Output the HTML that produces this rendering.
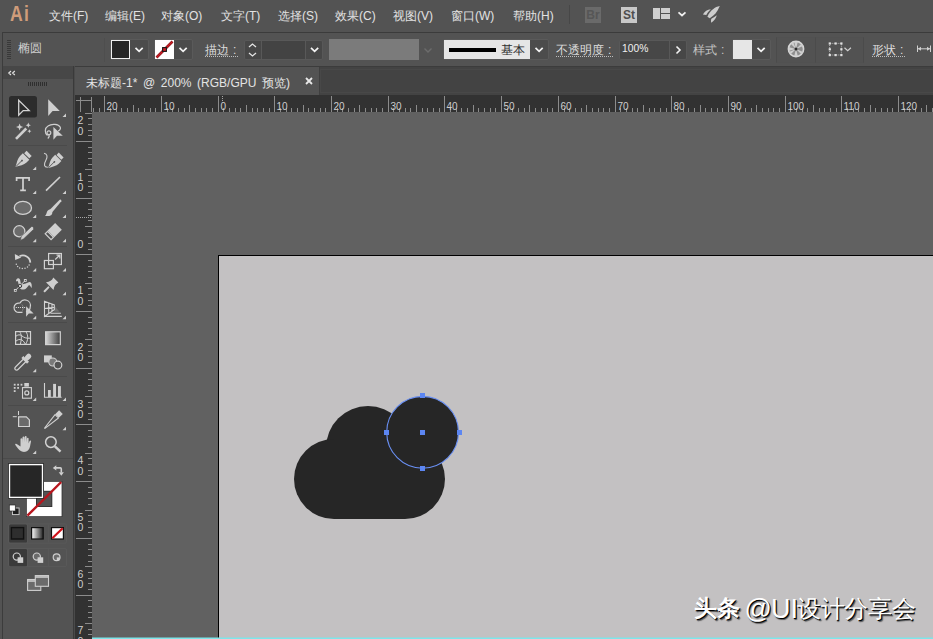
<!DOCTYPE html>
<html><head><meta charset="utf-8">
<style>
*{box-sizing:border-box}
html,body{margin:0;padding:0}
body{width:933px;height:639px;overflow:hidden;position:relative;background:#535353;font-family:"Liberation Sans",sans-serif;color:#d6d6d6}
.a{position:absolute}
.menu{top:0;left:0;width:933px;height:31px;background:#535353}
.mi{position:absolute;top:8px;font-size:12px;line-height:16px;color:#e2e2e2;white-space:nowrap}
.ctrl{top:31px;left:0;width:933px;height:35px;background:#535353;border-top:1px solid #535353}
.lbl{position:absolute;font-size:12px;line-height:16px;color:#d8d8d8;white-space:nowrap}
.tabrow{top:66px;left:0;width:933px;height:29px;background:#434343}
.ruler-top{top:95px;left:75px;width:858px;height:17px;background:#323232}
.ruler-left{top:95px;left:75px;width:17px;height:544px;background:#323232}
.paste{top:112px;left:92px;width:841px;height:527px;background:#616161}
.artboard{top:255px;left:218px;width:715px;height:384px;background:#c3c1c2;border-top:1px solid #000;border-left:1px solid #000}
.tool{position:absolute;left:0;top:66px;width:75px;height:573px;background:#535353}
</style></head>
<body>
<div class="a menu">
  <div class="a" style="left:10px;top:1px;font-size:22px;line-height:26px;color:#cf9c7a;font-weight:bold;transform:scaleX(0.8);transform-origin:0 0;letter-spacing:1.5px">Ai</div>
  <div class="mi" style="left:49px">文件(F)</div>
  <div class="mi" style="left:105px">编辑(E)</div>
  <div class="mi" style="left:161px">对象(O)</div>
  <div class="mi" style="left:221px">文字(T)</div>
  <div class="mi" style="left:278px">选择(S)</div>
  <div class="mi" style="left:335px">效果(C)</div>
  <div class="mi" style="left:393px">视图(V)</div>
  <div class="mi" style="left:451px">窗口(W)</div>
  <div class="mi" style="left:513px">帮助(H)</div>
  <div class="a" style="left:569px;top:5px;width:1px;height:19px;background:#474747"></div>
  <div class="a" style="left:585px;top:7px;width:16px;height:15.5px;background:#6a6a6a;color:#565656;font-size:12px;line-height:16px;font-weight:bold;text-align:center">Br</div>
  <div class="a" style="left:621px;top:7px;width:16px;height:15.5px;background:#c8c8c8;color:#4e4e4e;font-size:12px;line-height:16px;font-weight:bold;text-align:center">St</div>
  <svg class="a" style="left:653px;top:8px" width="36" height="12"><g fill="#cfcfcf"><rect x="0" y="0" width="7" height="11"/><rect x="8" y="0" width="9" height="5"/><rect x="8" y="6" width="9" height="5"/></g><path d="M25.5 4.3l3.5 3.2 3.5-3.2" fill="none" stroke="#f0f0f0" stroke-width="1.7"/></svg>
  <svg class="a" style="left:698px;top:2px" width="26" height="24"><g fill="#cdcdcd"><path d="M21.8 4.1C17 5 12.5 8 9.4 14.7L11.7 16.2C16 14 19.5 10 21.8 4.1Z"/><path d="M4.9 12.6C6.5 9.5 9.5 7.6 12.8 7.3C10.8 9.3 9.3 11 8.3 13Z"/><path d="M13.2 20.7C12.9 18.8 13 17.6 13.4 16.7C15.5 15.8 17.3 14.6 18.8 13.3C18 16.5 16 19 13.2 20.7Z"/></g></svg>
</div>
<div class="a ctrl">
  <div class="a" style="left:2px;top:0;width:931px;height:1px;background:#3b3b3b"></div>
  <div class="a" style="left:2px;top:0;width:1px;height:35px;background:#3c3c3c"></div>
  <div class="a" style="left:7px;top:8px;width:3.5px;height:19px;background:repeating-linear-gradient(#393939 0 1px,transparent 1px 2px)"></div>
  <div class="lbl" style="left:18px;top:8px;color:#cfcfcf">椭圆</div>
  <div class="a" style="left:104px;top:6px;width:1px;height:24px;background:#4e4e4e"></div>

  <div class="a" style="left:110px;top:7px;width:39px;height:21px;background:#4c4c4c;border:1px solid #5a5a5a;border-radius:2px"></div>
  <div class="a" style="left:111px;top:8px;width:19px;height:19px;background:#262626;border:1px solid #f0f0f0"></div>
  <svg class="a" style="left:130px;top:8px" width="18" height="20"><path d="M5.5 7.8l3.6 3.6 3.6-3.6" fill="none" stroke="#f4f4f4" stroke-width="1.7"/></svg>
  <div class="a" style="left:154px;top:7px;width:39px;height:21px;background:#4c4c4c;border:1px solid #5a5a5a;border-radius:2px"></div>
  <svg class="a" style="left:155px;top:8px" width="19" height="19"><rect width="19" height="19" fill="#fff"/><path d="M1.5 17.5L17.5 1.5" stroke="#8e1016" stroke-width="2.6"/><path d="M1.8 17.2L17.2 1.8" stroke="#c81c25" stroke-width="1.3"/><rect x="7.6" y="7.6" width="3.8" height="3.8" fill="#c81c25" stroke="#1a1a1a" stroke-width="1.1"/></svg>
  <svg class="a" style="left:174px;top:8px" width="18" height="20"><path d="M5.5 7.8l3.6 3.6 3.6-3.6" fill="none" stroke="#f4f4f4" stroke-width="1.7"/></svg>
  <div class="lbl" style="left:205px;top:10px;color:#dcdcdc">描边<span style="margin-left:4px">:</span></div>
  <div class="a" style="left:205px;top:24px;width:33px;height:1px;background:repeating-linear-gradient(90deg,#bdbdbd 0 1px,transparent 1px 2px)"></div>
  <div class="a" style="left:244px;top:8px;width:79px;height:20px;background:#474747;border:1px solid #585858;border-radius:2px"></div>
  <div class="a" style="left:261px;top:9px;width:45px;height:18px;background:#434343;border-left:1px solid #585858;border-right:1px solid #585858"></div>
  <svg class="a" style="left:244px;top:8px" width="18" height="20"><path d="M5 7l3.5-3 3.5 3M5 13l3.5 3 3.5-3" fill="none" stroke="#e6e6e6" stroke-width="1.3"/></svg>
  <svg class="a" style="left:306px;top:8px" width="17" height="20"><path d="M5 7.8l3.6 3.6 3.6-3.6" fill="none" stroke="#f4f4f4" stroke-width="1.7"/></svg>
  <div class="a" style="left:329px;top:7px;width:90px;height:21px;background:#7b7b7b"></div>
  <svg class="a" style="left:419px;top:8px" width="18" height="20"><path d="M5.5 8.5l3.5 3.5 3.5-3.5" fill="none" stroke="#6c6c6c" stroke-width="1.4"/></svg>
  <div class="a" style="left:443px;top:7px;width:106px;height:21px;background:#4c4c4c;border:1px solid #5a5a5a;border-radius:2px"></div>
  <div class="a" style="left:444px;top:8px;width:86px;height:19px;background:#e6e6e6"></div>
  <div class="a" style="left:449px;top:15.5px;width:47px;height:4px;background:#000"></div>
  <div class="lbl" style="left:501px;top:10px;color:#2e2e2e">基本</div>
  <svg class="a" style="left:530px;top:8px" width="18" height="20"><path d="M5.5 7.8l3.6 3.6 3.6-3.6" fill="none" stroke="#f4f4f4" stroke-width="1.7"/></svg>
  <div class="lbl" style="left:556px;top:10px;color:#dcdcdc">不透明度<span style="margin-left:4px">:</span></div>
  <div class="a" style="left:556px;top:24px;width:57px;height:1px;background:repeating-linear-gradient(90deg,#bdbdbd 0 1px,transparent 1px 2px)"></div>
  <div class="a" style="left:619px;top:8px;width:68px;height:20px;background:#474747;border:1px solid #585858;border-radius:2px"></div>
  <div class="a" style="left:669px;top:9px;width:1px;height:18px;background:#585858"></div>
  <div class="a" style="left:622px;top:9.5px;font-size:10.3px;line-height:14px;color:#f0f0f0">100%</div>
  <svg class="a" style="left:670px;top:8px" width="17" height="20"><path d="M6.5 6.5l3.5 3.5-3.5 3.5" fill="none" stroke="#f2f2f2" stroke-width="1.6"/></svg>
  <div class="lbl" style="left:693px;top:10px;color:#c4c4c4">样式<span style="margin-left:4px">:</span></div>
  <div class="a" style="left:732px;top:7px;width:39px;height:21px;background:#4c4c4c;border:1px solid #5a5a5a;border-radius:2px"></div>
  <div class="a" style="left:733px;top:8px;width:19px;height:19px;background:#e6e6e6"></div>
  <svg class="a" style="left:752px;top:8px" width="18" height="20"><path d="M5.5 7.8l3.6 3.6 3.6-3.6" fill="none" stroke="#f4f4f4" stroke-width="1.7"/></svg>
  <div class="a" style="left:776px;top:5px;width:40px;height:26px;background:#525252;border:1px solid #4b4b4b;border-top-color:#515151;border-bottom-color:#515151"></div>
  <div class="a" style="left:816px;top:5px;width:48px;height:26px;background:#525252;border:1px solid #4b4b4b;border-left:none;border-top-color:#515151;border-bottom-color:#515151"></div>
  <svg class="a" style="left:786px;top:7px" width="20" height="20"><circle cx="10" cy="10" r="7.6" fill="#8e8e8e" stroke="#d6d6d6" stroke-width="1.6"/><g fill="#cdcdcd"><path d="M10 10L8.2 2.8H11.8Z"/><path d="M10 10L15.1 4.9L17.2 7.1Z"/><path d="M10 10L17.2 11.8V8.2Z" opacity="0"/><path d="M10 10L17.2 12.9L15.1 15.1Z"/><path d="M10 10L11.8 17.2H8.2Z"/><path d="M10 10L4.9 15.1L2.8 12.9Z"/><path d="M10 10L2.8 8.2V11.8Z"/><path d="M10 10L4.9 4.9L7.1 2.8Z"/></g><circle cx="10" cy="10" r="1.5" fill="#2a2a2a"/></svg>
  <svg class="a" style="left:826px;top:9px" width="28" height="17"><path d="M3.7 2.4H15.4V14H3.7Z" fill="none" stroke="#bdbdbd" stroke-width="0.9" stroke-dasharray="1 1"/><g fill="#e0e0e0"><rect x="2.7" y="1.4" width="2.2" height="2.2"/><rect x="8.5" y="1.4" width="2.2" height="2.2"/><rect x="14.3" y="1.4" width="2.2" height="2.2"/><rect x="2.7" y="7.2" width="2.2" height="2.2"/><rect x="14.3" y="7.2" width="2.2" height="2.2"/><rect x="2.7" y="13" width="2.2" height="2.2"/><rect x="8.5" y="13" width="2.2" height="2.2"/><rect x="14.3" y="13" width="2.2" height="2.2"/></g><path d="M18.5 6.8l3.2 3 3.2-3" fill="none" stroke="#d0d0d0" stroke-width="1.2"/></svg>
  
  <div class="lbl" style="left:872px;top:10px;color:#dcdcdc">形状<span style="margin-left:4px">:</span></div>
  <div class="a" style="left:872px;top:24px;width:34px;height:1px;background:repeating-linear-gradient(90deg,#bdbdbd 0 1px,transparent 1px 2px)"></div>
  <svg class="a" style="left:916px;top:12px" width="17" height="10"><path d="M1.5 1.5V8M14.5 1.5V8M2 4.8H14" fill="none" stroke="#d0d0d0" stroke-width="1"/><path d="M2 4.8L5 2.8V6.8ZM14 4.8L11 2.8V6.8Z" fill="#d0d0d0"/></svg>
</div>
<div class="a tabrow" style="border-top:1px solid #3c3c3c">
  <div class="a" style="left:320px;top:2px;width:613px;height:24px;border:1px solid #484848;border-right:none"></div>
  <div class="a" style="left:75px;top:0;width:244px;height:28px;background:#535353"></div>
  <div class="a" style="left:319px;top:0;width:1px;height:28px;background:#3f3f3f"></div>
  <div class="a" style="left:86px;top:7.5px;font-size:12px;line-height:16px;color:#e4e4e4;white-space:nowrap;word-spacing:2.3px">未标题-1* @ 200% (RGB/GPU 预览)</div>
  <svg class="a" style="left:304px;top:9px" width="10" height="10"><path d="M2 2l6 6M8 2l-6 6" stroke="#e8e8e8" stroke-width="1.8"/></svg>
</div>
<div class="a tool">
  <div class="a" style="left:2px;top:0;width:1px;height:573px;background:#3c3c3c"></div>
  <div class="a" style="left:73px;top:0;width:1px;height:573px;background:#3a3a3a"></div><div class="a" style="left:74px;top:0;width:1px;height:573px;background:#4a4a4a"></div>
  <div class="a" style="left:3px;top:0;width:70px;height:12.5px;background:#474747"></div>
  <svg class="a" style="left:7px;top:4px" width="10" height="6"><path d="M4 1L1.8 3 4 5M7.8 1L5.6 3 7.8 5" fill="none" stroke="#e0e0e0" stroke-width="1.2"/></svg>
  <div class="a" style="left:28px;top:16px;width:20px;height:4px;background:repeating-linear-gradient(90deg,#2f2f2f 0 1px,transparent 1px 2px)"></div>
</div>
<!--TOOLS-->
<svg class="a" style="left:0;top:0" width="75" height="639" viewBox="0 0 75 639">
<g fill="none" stroke="#4a4a4a" stroke-width="1">
<path d="M8 145.5H67M8 246.5H67M8 322.5H67M8 376.5H67M8 405.5H67M3 458.5H73"/>
</g>
<rect x="9" y="96" width="28" height="21.5" rx="2.5" fill="#2c2c2c"/>
<g fill="#cfcfcf">
<!-- tri indicators -->
<path d="M66 113.5V117H62.5Z"/>
<path d="M36.2 166.5V170H32.7Z"/>
<path d="M36.2 190.5V194H32.7Z"/><path d="M66 190.5V194H62.5Z"/>
<path d="M36.2 214.5V218H32.7Z"/><path d="M66 214.5V218H62.5Z"/>
<path d="M36.2 238.8V242.3H32.7Z"/><path d="M66 238.8V242.3H62.5Z"/>
<path d="M36.2 268V271.5H32.7Z"/><path d="M66 268V271.5H62.5Z"/>
<path d="M36.2 291.7V295.2H32.7Z"/><path d="M66 291.7V295.2H62.5Z"/>
<path d="M36.2 315.8V319.3H32.7Z"/><path d="M66 315.8V319.3H62.5Z"/>
<path d="M36.2 368.7V372.2H32.7Z"/>
<path d="M36.2 397.6V401.1H32.7Z"/><path d="M66 397.6V401.1H62.5Z"/>
<path d="M66 426.8V430.3H62.5Z"/>
<path d="M36.2 450.5V454H32.7Z"/>
</g>
<!-- selection -->
<path d="M18.7 100.2V115.2L23.2 110.6H29.2Z" fill="none" stroke="#d4d4d4" stroke-width="1.3" stroke-linejoin="miter"/>
<path d="M48.2 99.3V116.1L52.6 110.9H59.8Z" fill="#cfcfcf"/>
<!-- magic wand -->
<path d="M16 138.8L26.3 128.5" stroke="#cfcfcf" stroke-width="2.6"/>
<path d="M19.6 123.4L20.6 126L23.2 127L20.6 128L19.6 130.6L18.6 128L16 127L18.6 126Z" fill="#cfcfcf"/>
<path d="M28.3 122.6L29.1 124.4L30.9 125.2L29.1 126L28.3 127.8L27.5 126L25.7 125.2L27.5 124.4Z" fill="#cfcfcf"/>
<path d="M29.4 129.2L30 130.6L31.4 131.2L30 131.8L29.4 133.2L28.8 131.8L27.4 131.2L28.8 130.6Z" fill="#cfcfcf"/>
<!-- lasso -->
<path d="M47.5 135.5C44.5 133.5 44.5 128 48 126C52 123.3 58.5 124 60.3 127.3C61 129 59.5 130.5 58 131" fill="none" stroke="#cfcfcf" stroke-width="1.2"/>
<circle cx="48.9" cy="132.7" r="1.9" fill="none" stroke="#cfcfcf" stroke-width="1.2"/>
<path d="M48.8 134.6C49.5 136 49 137.5 47.8 138.4" fill="none" stroke="#cfcfcf" stroke-width="1.2"/>
<path d="M53.4 127V139.8L57 135.8H62.8Z" fill="#cfcfcf"/>
<!-- pen -->
<g transform="translate(22.2 160.3) rotate(45)">
<rect x="-3.6" y="-9.8" width="7.2" height="3.4" fill="#cfcfcf"/>
<path d="M-4.6 -5.5H4.6V-1.5C4.6 2 2 5.5 0 9.6C-2 5.5 -4.6 2 -4.6 -1.5Z" fill="#cfcfcf"/>
<path d="M0 0.5V9" stroke="#535353" stroke-width="0.9"/>
<circle cx="0" cy="0.3" r="0.9" fill="#535353"/>
</g>
<!-- curvature pen -->
<g transform="translate(54.6 161.6) rotate(45) scale(0.95)">
<rect x="-3.6" y="-9.8" width="7.2" height="3.4" fill="#cfcfcf"/>
<path d="M-4.6 -5.5H4.6V-1.5C4.6 2 2 5.5 0 9.6C-2 5.5 -4.6 2 -4.6 -1.5Z" fill="#cfcfcf"/>
<path d="M0 0.5V9" stroke="#535353" stroke-width="0.9"/>
<circle cx="0" cy="0.3" r="0.9" fill="#535353"/>
</g>
<path d="M44 153.2C47.5 153.8 47.8 157 45.8 160.5C43.5 164.5 44 167.5 47.8 167.3" fill="none" stroke="#cfcfcf" stroke-width="1.1"/>
<!-- type -->
<path d="M16.6 181V177.8H29.1V181M23 177.8V190.3M20.2 190.3H25.9" fill="none" stroke="#d2d2d2" stroke-width="1.7"/>
<!-- line -->
<path d="M46 190.6L60 177" stroke="#cfcfcf" stroke-width="1.7"/>
<!-- ellipse -->
<ellipse cx="22.9" cy="207.9" rx="8.6" ry="6.5" fill="#6b6b6b" stroke="#d2d2d2" stroke-width="1.3"/>
<!-- paintbrush -->
<path d="M49.74 209.86L59.69 199.76Q61.6 198.9 61.31 201.24L52.26 212.14Z" fill="#cfcfcf"/>
<path d="M50.5 209.5C52.6 210.6 53 213.4 51.4 214.9C49.9 216.2 47.5 216 45 216C46.7 214.4 46.4 212.8 47.4 211.1C48.2 209.7 49.5 209.1 50.5 209.5Z" fill="#cfcfcf"/>
<!-- blob brush -->
<circle cx="19.3" cy="231.3" r="5.6" fill="#6b6b6b" stroke="#d2d2d2" stroke-width="1.3"/>
<path d="M21.28 236.19L31.28 226.69Q33.6 225.6 33.72 229.31L23.72 238.81L20.3 240.4Z" fill="#cfcfcf" stroke="#535353" stroke-width="0.7"/>
<!-- eraser -->
<g transform="translate(53.3 231.6) rotate(45)">
<rect x="-4.75" y="-7.3" width="9.5" height="10.6" fill="#cfcfcf"/>
<rect x="-4.15" y="3.9" width="8.3" height="3.4" fill="none" stroke="#cfcfcf" stroke-width="1.2"/>
</g>
<!-- rotate -->
<path d="M19.5 256.3A7.4 7.4 0 0 1 30.3 262.6" fill="none" stroke="#d2d2d2" stroke-width="1.8"/>
<path d="M14.8 253.9L15.2 260L21.2 257.6Z" fill="#d2d2d2"/>
<g fill="#cfcfcf"><circle cx="16.3" cy="264.2" r="0.75"/><circle cx="17.6" cy="266.4" r="0.75"/><circle cx="19.6" cy="268" r="0.75"/><circle cx="22.3" cy="268.6" r="0.75"/><circle cx="25" cy="268.3" r="0.75"/><circle cx="27.5" cy="266.9" r="0.75"/><circle cx="29.1" cy="265" r="0.75"/></g>
<!-- scale -->
<rect x="48.6" y="253.5" width="12.8" height="11" fill="none" stroke="#d2d2d2" stroke-width="1.2"/>
<rect x="44.4" y="260.5" width="9" height="8.2" fill="none" stroke="#d2d2d2" stroke-width="1.2"/>
<path d="M55.2 259.5L59.6 255.2M56.5 255.2H59.8V258.5" fill="none" stroke="#cfcfcf" stroke-width="1.2"/>
<!-- puppet -->
<path d="M16 281.5C15.8 279.5 17 278 18.5 278.2C20 278.4 20.3 280 20.5 282C21 284.5 22.5 284.5 25 283.8C27 283.2 28.5 281.8 30 282C31.5 282.3 32 285 31.7 288C30.8 287 30 285.5 29 285C27.5 287 26 289.6 23 289.6C21 289.6 19.5 288.5 19 286.5C18.5 284.5 18.5 282 17.5 281C17 280.8 16.5 281 16 281.5Z" fill="#cfcfcf"/>
<path d="M15.4 290.4L25.3 280.4" stroke="#cfcfcf" stroke-width="1"/>
<rect x="23.9" y="279" width="2.8" height="2.8" fill="#cfcfcf"/><rect x="24.9" y="280" width="0.9" height="0.9" fill="#333"/>
<circle cx="20" cy="285.9" r="1.7" fill="#cfcfcf" stroke="#2e2e2e" stroke-width="0.9"/>
<rect x="13.9" y="289" width="2.8" height="2.8" fill="#cfcfcf"/><rect x="14.9" y="290" width="0.9" height="0.9" fill="#333"/>
<!-- pin -->
<path d="M53.3 277.4L58.4 282.5Q54.2 284.3 53.5 289.9L46 282.3Q51.6 281.6 53.3 277.4Z" fill="#cfcfcf"/>
<path d="M48.4 287.4L44.6 291.2" stroke="#cfcfcf" stroke-width="2" stroke-linecap="round"/>
<!-- shape builder -->
<path d="M19.9 303.2A5.5 5.5 0 0 1 30.3 306.6M30.3 306.6A5.5 5.5 0 0 1 26 311.9M22.5 312.1A5.5 5.5 0 0 1 19.9 312.3A4.7 4.7 0 1 1 19.9 303.2" fill="none" stroke="#d2d2d2" stroke-width="1.2"/>
<path d="M21.8 304.4A4.7 4.7 0 0 1 22.4 310.8" fill="none" stroke="#8a8a8a" stroke-width="0.8"/>
<g fill="#e0e0e0"><rect x="15.8" y="307" width="1" height="1"/><rect x="17.9" y="307" width="1" height="1"/><rect x="19.9" y="307" width="1" height="1"/><rect x="22" y="307" width="1" height="1"/><rect x="24.1" y="307" width="1" height="1"/></g>
<path d="M26.1 306.3V316.8L28.8 313.5H33.6Z" fill="#cfcfcf"/>
<!-- perspective grid -->
<path d="M54.3 305.5L59.5 311.8H54.3Z" fill="#6e6e6e"/>
<path d="M44.5 301.2V316.4L54.3 309.6V305L44.5 301.2ZM48.7 302.9V313.2M52 304.1V311.2M44.5 308.5L54.3 307.3M50.5 313.3H60.8M44.5 316.4H61.8" fill="none" stroke="#d2d2d2" stroke-width="1.1"/>
<!-- mesh -->
<rect x="15.6" y="331.6" width="14.9" height="12.8" fill="none" stroke="#d2d2d2" stroke-width="1.2"/>
<path d="M19.5 331.5C21.5 334 22 337.5 20.3 344.5M25.8 331.5C28.5 335 28.3 340 25.5 344.5M15.5 336.5C18 334.5 20 334.2 22 336C24 337.5 26 338.5 30.5 338.2M15.5 341.5C17.5 339.5 20 339 22 340C23.5 341 24.5 342.5 25.5 344.5" fill="none" stroke="#d2d2d2" stroke-width="1"/>
<!-- gradient -->
<defs><linearGradient id="gr" x1="0" x2="1"><stop offset="0" stop-color="#d8d8d8"/><stop offset="1" stop-color="#3e3e3e"/></linearGradient>
<linearGradient id="gr2" x1="0" x2="1"><stop offset="0" stop-color="#ffffff"/><stop offset="1" stop-color="#222"/></linearGradient></defs>
<rect x="45.6" y="331.8" width="14.7" height="12.8" fill="url(#gr)" stroke="#d2d2d2" stroke-width="1.2"/>
<!-- eyedropper -->
<g transform="translate(23 362) rotate(45)">
<path d="M-1.8 -2.5V8.5C-1.8 10 -0.9 10.8 0 10.8C0.9 10.8 1.8 10 1.8 8.5V-2.5" fill="none" stroke="#cfcfcf" stroke-width="1.2"/>
<rect x="-4" y="-4.5" width="8" height="2.8" fill="#cfcfcf"/>
<rect x="-2.5" y="-10.5" width="5" height="7" rx="2.2" fill="#cfcfcf"/>
</g>
<!-- blend -->
<rect x="44" y="355.4" width="7.8" height="7" fill="#cfcfcf"/>
<circle cx="52.8" cy="362" r="4" fill="#7a7a7a" stroke="#cfcfcf" stroke-width="1.1"/>
<circle cx="57.9" cy="365.1" r="3.9" fill="#535353" stroke="#d2d2d2" stroke-width="1.2"/>
<!-- symbol sprayer -->
<g fill="#cfcfcf"><rect x="13.8" y="383.8" width="1.8" height="1.8"/><rect x="17.2" y="383.8" width="1.8" height="1.8"/><rect x="20.6" y="383.8" width="1.8" height="1.8"/><rect x="13.8" y="387" width="1.8" height="1.8"/><rect x="17.2" y="387" width="1.8" height="1.8"/><rect x="13.8" y="390.2" width="1.8" height="1.8"/>
<rect x="24.3" y="383" width="4.6" height="3.6"/></g>
<rect x="22.5" y="387.6" width="8.9" height="10.6" fill="none" stroke="#d2d2d2" stroke-width="1.1"/>
<circle cx="26.8" cy="392.9" r="2" fill="none" stroke="#d2d2d2" stroke-width="1.2"/>
<!-- column graph -->
<path d="M44.5 383V397.3H61.6" fill="none" stroke="#d2d2d2" stroke-width="1.1"/>
<g fill="#cfcfcf"><rect x="48" y="390" width="2.8" height="7"/><rect x="53.1" y="383.9" width="2.9" height="13.1"/><rect x="58" y="386.1" width="2.9" height="10.9"/></g>
<!-- artboard -->
<path d="M18.5 411V415M12.8 416.7H16.8" stroke="#d2d2d2" stroke-width="1"/>
<path d="M18.6 416.8H26.3L29.4 419.9V426.5H18.6Z" fill="#6b6b6b" stroke="#d2d2d2" stroke-width="1.2"/>
<!-- slice -->
<g transform="translate(53 420) rotate(45)">
<rect x="-2.6" y="-11.2" width="5.2" height="5.5" fill="#cfcfcf"/>
<path d="M-2.4 -5.3H2.4L0.3 11.6L-0.3 11.6Z" fill="none" stroke="#cfcfcf" stroke-width="1.1" stroke-linejoin="round"/>
</g>
<!-- hand -->
<path d="M17.5 444.5C16.3 443.4 15 443.6 15.2 444.8C16.5 447 18.2 449 20 450.5C21.5 451.7 23.5 452.2 25.5 451.8C28.2 451.2 29.5 449 30 446.5L31 441.5C31.2 440.3 30 440 29.5 441L28.6 443.5V438.6C28.6 437.4 27 437.4 26.9 438.6L26.6 442.6V437C26.6 435.7 24.8 435.7 24.7 437L24.4 442.5V437.5C24.4 436.3 22.6 436.3 22.5 437.5L22.3 443V439C22.2 437.9 20.6 437.9 20.5 439V446.5Z" fill="#cfcfcf"/>
<!-- zoom -->
<circle cx="50.9" cy="442.1" r="5.3" fill="none" stroke="#d2d2d2" stroke-width="1.5"/>
<path d="M54.9 446.3L60.5 451.6" stroke="#cfcfcf" stroke-width="2.5"/>
<!-- fill / stroke -->
<rect x="26" y="481" width="36.4" height="36" fill="#333"/>
<rect x="26.8" y="481.8" width="34.8" height="34.4" fill="#fff"/>
<rect x="36" y="490.8" width="16.3" height="16.2" fill="#333"/>
<rect x="36.9" y="491.7" width="14.5" height="14.4" fill="#535353"/>
<path d="M27.4 515.7L61.2 482" stroke="#b8161e" stroke-width="2.4"/>
<rect x="8" y="463" width="36" height="35.7" fill="#2e2e2e"/>
<rect x="8.9" y="463.9" width="34.2" height="34.1" fill="#fdfdfd"/>
<rect x="10.2" y="465.3" width="31.6" height="31.4" fill="#262626"/>
<!-- swap -->
<path d="M55.5 467.9H60.3Q61.3 467.9 61.3 469V472.5" fill="none" stroke="#cfcfcf" stroke-width="1.6"/>
<path d="M52.8 467.9L56.3 465.3V470.5Z M58.7 472.3H63.9L61.3 475.7Z" fill="#cfcfcf"/>
<!-- default -->
<rect x="12.5" y="508" width="6.6" height="6.6" fill="#1e1e1e" stroke="#d0d0d0" stroke-width="0.9"/>
<rect x="9.3" y="505" width="6" height="6" fill="#fff" stroke="#2a2a2a" stroke-width="0.7"/>
<!-- color modes -->
<rect x="8.5" y="523.9" width="58" height="19.3" rx="1.5" fill="none" stroke="#5b5b5b" stroke-width="0.8"/>
<rect x="9.1" y="524.4" width="18" height="18.2" rx="1.5" fill="#3a3a3a"/>
<path d="M27.6 524.5V542.5M48.3 524.5V542.5" stroke="#5b5b5b" stroke-width="0.8"/>
<rect x="11.4" y="527.6" width="12.2" height="11.4" fill="#2e2e2e" stroke="#111" stroke-width="1.4"/>
<rect x="31.6" y="527.6" width="11.6" height="11.4" fill="url(#gr2)" stroke="#111" stroke-width="1.2"/>
<rect x="51.5" y="527.6" width="11.9" height="11.4" fill="#fff" stroke="#111" stroke-width="1.2"/>
<path d="M52.3 538.3L62.7 528.3" stroke="#d0121a" stroke-width="2.2"/>
<!-- draw modes -->
<rect x="8.5" y="548.6" width="58" height="18" rx="1.5" fill="none" stroke="#5b5b5b" stroke-width="0.8"/>
<rect x="9.1" y="549" width="18" height="17.3" rx="1.5" fill="#3a3a3a"/>
<path d="M27.6 549V566.2M48.3 549V566.2" stroke="#5b5b5b" stroke-width="0.8"/>
<circle cx="16.8" cy="556.6" r="3.6" fill="none" stroke="#cfcfcf" stroke-width="1.2"/>
<rect x="17.6" y="557.3" width="5.6" height="5.6" fill="#cfcfcf"/>
<circle cx="36.8" cy="556.6" r="3.6" fill="#6b6b6b" stroke="#cfcfcf" stroke-width="1.2"/>
<rect x="37.6" y="557.3" width="5.6" height="5.6" fill="#cfcfcf"/>
<circle cx="56.6" cy="557.2" r="3.4" fill="#6b6b6b" stroke="#cfcfcf" stroke-width="1.2"/>
<rect x="56.8" y="557.4" width="2.9" height="2.9" fill="#cfcfcf"/>
<!-- screen mode -->
<rect x="27.6" y="579.5" width="13.2" height="10.9" fill="#6b6b6b" stroke="#cfcfcf" stroke-width="1.1"/>
<path d="M27.6 581H40.8" stroke="#cfcfcf" stroke-width="1.6"/>
<rect x="35.3" y="575.6" width="13.2" height="10.7" fill="#6b6b6b" stroke="#cfcfcf" stroke-width="1.1"/>
<path d="M35.3 577H48.5" stroke="#cfcfcf" stroke-width="1.6"/>
</svg>

<!--/TOOLS-->
<div class="a ruler-top"></div>
<div class="a ruler-left"></div>
<svg class="a" style="left:0;top:95px" width="933" height="17"><path d="M93.5 13V17M99.5 13V17M104.5 1V17M110.5 13V17M116.5 13V17M121.5 13V17M127.5 13V17M133.5 10V17M138.5 13V17M144.5 13V17M150.5 13V17M155.5 13V17M161.5 1V17M167.5 13V17M172.5 13V17M178.5 13V17M184.5 13V17M189.5 10V17M195.5 13V17M201.5 13V17M206.5 13V17M212.5 13V17M218.5 1V17M223.5 13V17M229.5 13V17M235.5 13V17M240.5 13V17M246.5 10V17M252.5 13V17M257.5 13V17M263.5 13V17M269.5 13V17M274.5 1V17M280.5 13V17M286.5 13V17M291.5 13V17M297.5 13V17M303.5 10V17M308.5 13V17M314.5 13V17M320.5 13V17M325.5 13V17M331.5 1V17M337.5 13V17M342.5 13V17M348.5 13V17M354.5 13V17M359.5 10V17M365.5 13V17M371.5 13V17M376.5 13V17M382.5 13V17M388.5 1V17M393.5 13V17M399.5 13V17M405.5 13V17M410.5 13V17M416.5 10V17M422.5 13V17M427.5 13V17M433.5 13V17M439.5 13V17M444.5 1V17M450.5 13V17M456.5 13V17M461.5 13V17M467.5 13V17M473.5 10V17M478.5 13V17M484.5 13V17M490.5 13V17M495.5 13V17M501.5 1V17M507.5 13V17M512.5 13V17M518.5 13V17M524.5 13V17M529.5 10V17M535.5 13V17M541.5 13V17M547.5 13V17M552.5 13V17M558.5 1V17M564.5 13V17M569.5 13V17M575.5 13V17M581.5 13V17M586.5 10V17M592.5 13V17M598.5 13V17M603.5 13V17M609.5 13V17M615.5 1V17M620.5 13V17M626.5 13V17M632.5 13V17M637.5 13V17M643.5 10V17M649.5 13V17M654.5 13V17M660.5 13V17M666.5 13V17M671.5 1V17M677.5 13V17M683.5 13V17M688.5 13V17M694.5 13V17M700.5 10V17M705.5 13V17M711.5 13V17M717.5 13V17M722.5 13V17M728.5 1V17M734.5 13V17M739.5 13V17M745.5 13V17M751.5 13V17M756.5 10V17M762.5 13V17M768.5 13V17M773.5 13V17M779.5 13V17M785.5 1V17M790.5 13V17M796.5 13V17M802.5 13V17M807.5 13V17M813.5 10V17M819.5 13V17M824.5 13V17M830.5 13V17M836.5 13V17M841.5 1V17M847.5 13V17M853.5 13V17M858.5 13V17M864.5 13V17M870.5 10V17M875.5 13V17M881.5 13V17M887.5 13V17M892.5 13V17M898.5 1V17M904.5 13V17M909.5 13V17M915.5 13V17M921.5 13V17M926.5 10V17M932.5 13V17" stroke="#8c8c8c" stroke-width="1" fill="none"/><text x="106.5" y="15" font-size="10" fill="#cdcdcd" font-family="Liberation Sans">20</text><text x="163.5" y="15" font-size="10" fill="#cdcdcd" font-family="Liberation Sans">10</text><text x="220.5" y="15" font-size="10" fill="#cdcdcd" font-family="Liberation Sans">0</text><text x="276.5" y="15" font-size="10" fill="#cdcdcd" font-family="Liberation Sans">10</text><text x="333.5" y="15" font-size="10" fill="#cdcdcd" font-family="Liberation Sans">20</text><text x="390.5" y="15" font-size="10" fill="#cdcdcd" font-family="Liberation Sans">30</text><text x="446.5" y="15" font-size="10" fill="#cdcdcd" font-family="Liberation Sans">40</text><text x="503.5" y="15" font-size="10" fill="#cdcdcd" font-family="Liberation Sans">50</text><text x="560.5" y="15" font-size="10" fill="#cdcdcd" font-family="Liberation Sans">60</text><text x="617.5" y="15" font-size="10" fill="#cdcdcd" font-family="Liberation Sans">70</text><text x="673.5" y="15" font-size="10" fill="#cdcdcd" font-family="Liberation Sans">80</text><text x="730.5" y="15" font-size="10" fill="#cdcdcd" font-family="Liberation Sans">90</text><text x="787.5" y="15" font-size="10" fill="#cdcdcd" font-family="Liberation Sans">100</text><text x="843.5" y="15" font-size="10" fill="#cdcdcd" font-family="Liberation Sans">110</text><text x="900.5" y="15" font-size="10" fill="#cdcdcd" font-family="Liberation Sans">120</text></svg><svg class="a" style="left:75px;top:0" width="17" height="639"><path d="M10 113.5H17M13 118.5H17M13 124.5H17M13 130.5H17M13 135.5H17M1 141.5H17M13 147.5H17M13 152.5H17M13 158.5H17M13 164.5H17M10 169.5H17M13 175.5H17M13 181.5H17M13 186.5H17M13 192.5H17M1 198.5H17M13 203.5H17M13 209.5H17M13 215.5H17M13 220.5H17M10 226.5H17M13 232.5H17M13 237.5H17M13 243.5H17M13 249.5H17M1 254.5H17M13 260.5H17M13 266.5H17M13 271.5H17M13 277.5H17M10 283.5H17M13 288.5H17M13 294.5H17M13 300.5H17M13 305.5H17M1 311.5H17M13 317.5H17M13 322.5H17M13 328.5H17M13 334.5H17M10 339.5H17M13 345.5H17M13 351.5H17M13 356.5H17M13 362.5H17M1 368.5H17M13 373.5H17M13 379.5H17M13 385.5H17M13 390.5H17M10 396.5H17M13 402.5H17M13 407.5H17M13 413.5H17M13 419.5H17M1 424.5H17M13 430.5H17M13 436.5H17M13 441.5H17M13 447.5H17M10 453.5H17M13 458.5H17M13 464.5H17M13 470.5H17M13 475.5H17M1 481.5H17M13 487.5H17M13 492.5H17M13 498.5H17M13 504.5H17M10 510.5H17M13 515.5H17M13 521.5H17M13 527.5H17M13 532.5H17M1 538.5H17M13 544.5H17M13 549.5H17M13 555.5H17M13 561.5H17M10 566.5H17M13 572.5H17M13 578.5H17M13 583.5H17M13 589.5H17M1 595.5H17M13 600.5H17M13 606.5H17M13 612.5H17M13 617.5H17M10 623.5H17M13 629.5H17M13 634.5H17" stroke="#8c8c8c" stroke-width="1" fill="none"/><text x="2.6" y="124.1" font-size="10.5" fill="#cdcdcd" font-family="Liberation Sans">2</text><text x="2.6" y="134.5" font-size="10.5" fill="#cdcdcd" font-family="Liberation Sans">0</text><text x="2.6" y="180.8" font-size="10.5" fill="#cdcdcd" font-family="Liberation Sans">1</text><text x="2.6" y="191.2" font-size="10.5" fill="#cdcdcd" font-family="Liberation Sans">0</text><text x="2.6" y="247.9" font-size="10.5" fill="#cdcdcd" font-family="Liberation Sans">0</text><text x="2.6" y="294.2" font-size="10.5" fill="#cdcdcd" font-family="Liberation Sans">1</text><text x="2.6" y="304.6" font-size="10.5" fill="#cdcdcd" font-family="Liberation Sans">0</text><text x="2.6" y="350.9" font-size="10.5" fill="#cdcdcd" font-family="Liberation Sans">2</text><text x="2.6" y="361.3" font-size="10.5" fill="#cdcdcd" font-family="Liberation Sans">0</text><text x="2.6" y="407.6" font-size="10.5" fill="#cdcdcd" font-family="Liberation Sans">3</text><text x="2.6" y="418.0" font-size="10.5" fill="#cdcdcd" font-family="Liberation Sans">0</text><text x="2.6" y="464.3" font-size="10.5" fill="#cdcdcd" font-family="Liberation Sans">4</text><text x="2.6" y="474.7" font-size="10.5" fill="#cdcdcd" font-family="Liberation Sans">0</text><text x="2.6" y="521.0" font-size="10.5" fill="#cdcdcd" font-family="Liberation Sans">5</text><text x="2.6" y="531.4" font-size="10.5" fill="#cdcdcd" font-family="Liberation Sans">0</text><text x="2.6" y="577.6" font-size="10.5" fill="#cdcdcd" font-family="Liberation Sans">6</text><text x="2.6" y="588.0" font-size="10.5" fill="#cdcdcd" font-family="Liberation Sans">0</text><text x="2.6" y="634.3" font-size="10.5" fill="#cdcdcd" font-family="Liberation Sans">7</text><text x="2.6" y="644.7" font-size="10.5" fill="#cdcdcd" font-family="Liberation Sans">0</text></svg>
<svg class="a" style="left:0;top:0" width="933" height="639"><path d="M222.5 96V102M76 217.5H92" stroke="#a8a8a8" stroke-width="1" stroke-dasharray="1 1"/></svg>
<div class="a" style="left:75px;top:95px;width:17px;height:17px;background:#323232"></div>
<svg class="a" style="left:75px;top:95px" width="17" height="17"><path d="M5.5 2V17M16.5 2V17M1 5.5H17" stroke="#8c8c8c" stroke-width="1"/></svg>
<div class="a paste"></div>
<div class="a artboard"></div>
<svg class="a" style="left:0;top:0" width="933" height="639">
<g fill="#262626">
<circle cx="368" cy="448" r="42"/>
<rect x="294" y="439" width="151" height="80" rx="40"/>
<circle cx="422.6" cy="432.3" r="36"/>
</g>
<circle cx="422.6" cy="432.3" r="35.9" fill="none" stroke="#6a90f4" stroke-width="1.1"/>
<g fill="#5c86f2">
<rect x="420" y="393" width="5" height="5"/>
<rect x="384" y="430" width="5" height="5"/>
<rect x="457" y="430" width="5" height="5"/>
<rect x="420" y="466" width="5" height="5"/>
<rect x="420" y="430" width="5" height="5"/>
</g>
<rect x="92" y="637.5" width="841" height="1.5" fill="#7ee6ea"/>
</svg>
<div class="a" style="left:0;top:593.5px;width:933px;height:0;font-family:'Liberation Sans',sans-serif;color:#fff;white-space:nowrap;line-height:30px;text-shadow:1px 1px 0 #000,1.5px 1.5px 1px rgba(0,0,0,.55)">
<span class="a" style="left:694px;top:0;font-size:22.5px;font-weight:900">头条</span>
<span class="a" style="left:744.5px;top:0;font-size:27px">@</span>
<span class="a" style="left:771px;top:0;font-size:27px">U</span>
<span class="a" style="left:790.5px;top:0;font-size:27px">I</span>
<span class="a" style="left:797px;top:0;font-size:24px;letter-spacing:-0.3px">设计分享会</span>
</div>
</body></html>
